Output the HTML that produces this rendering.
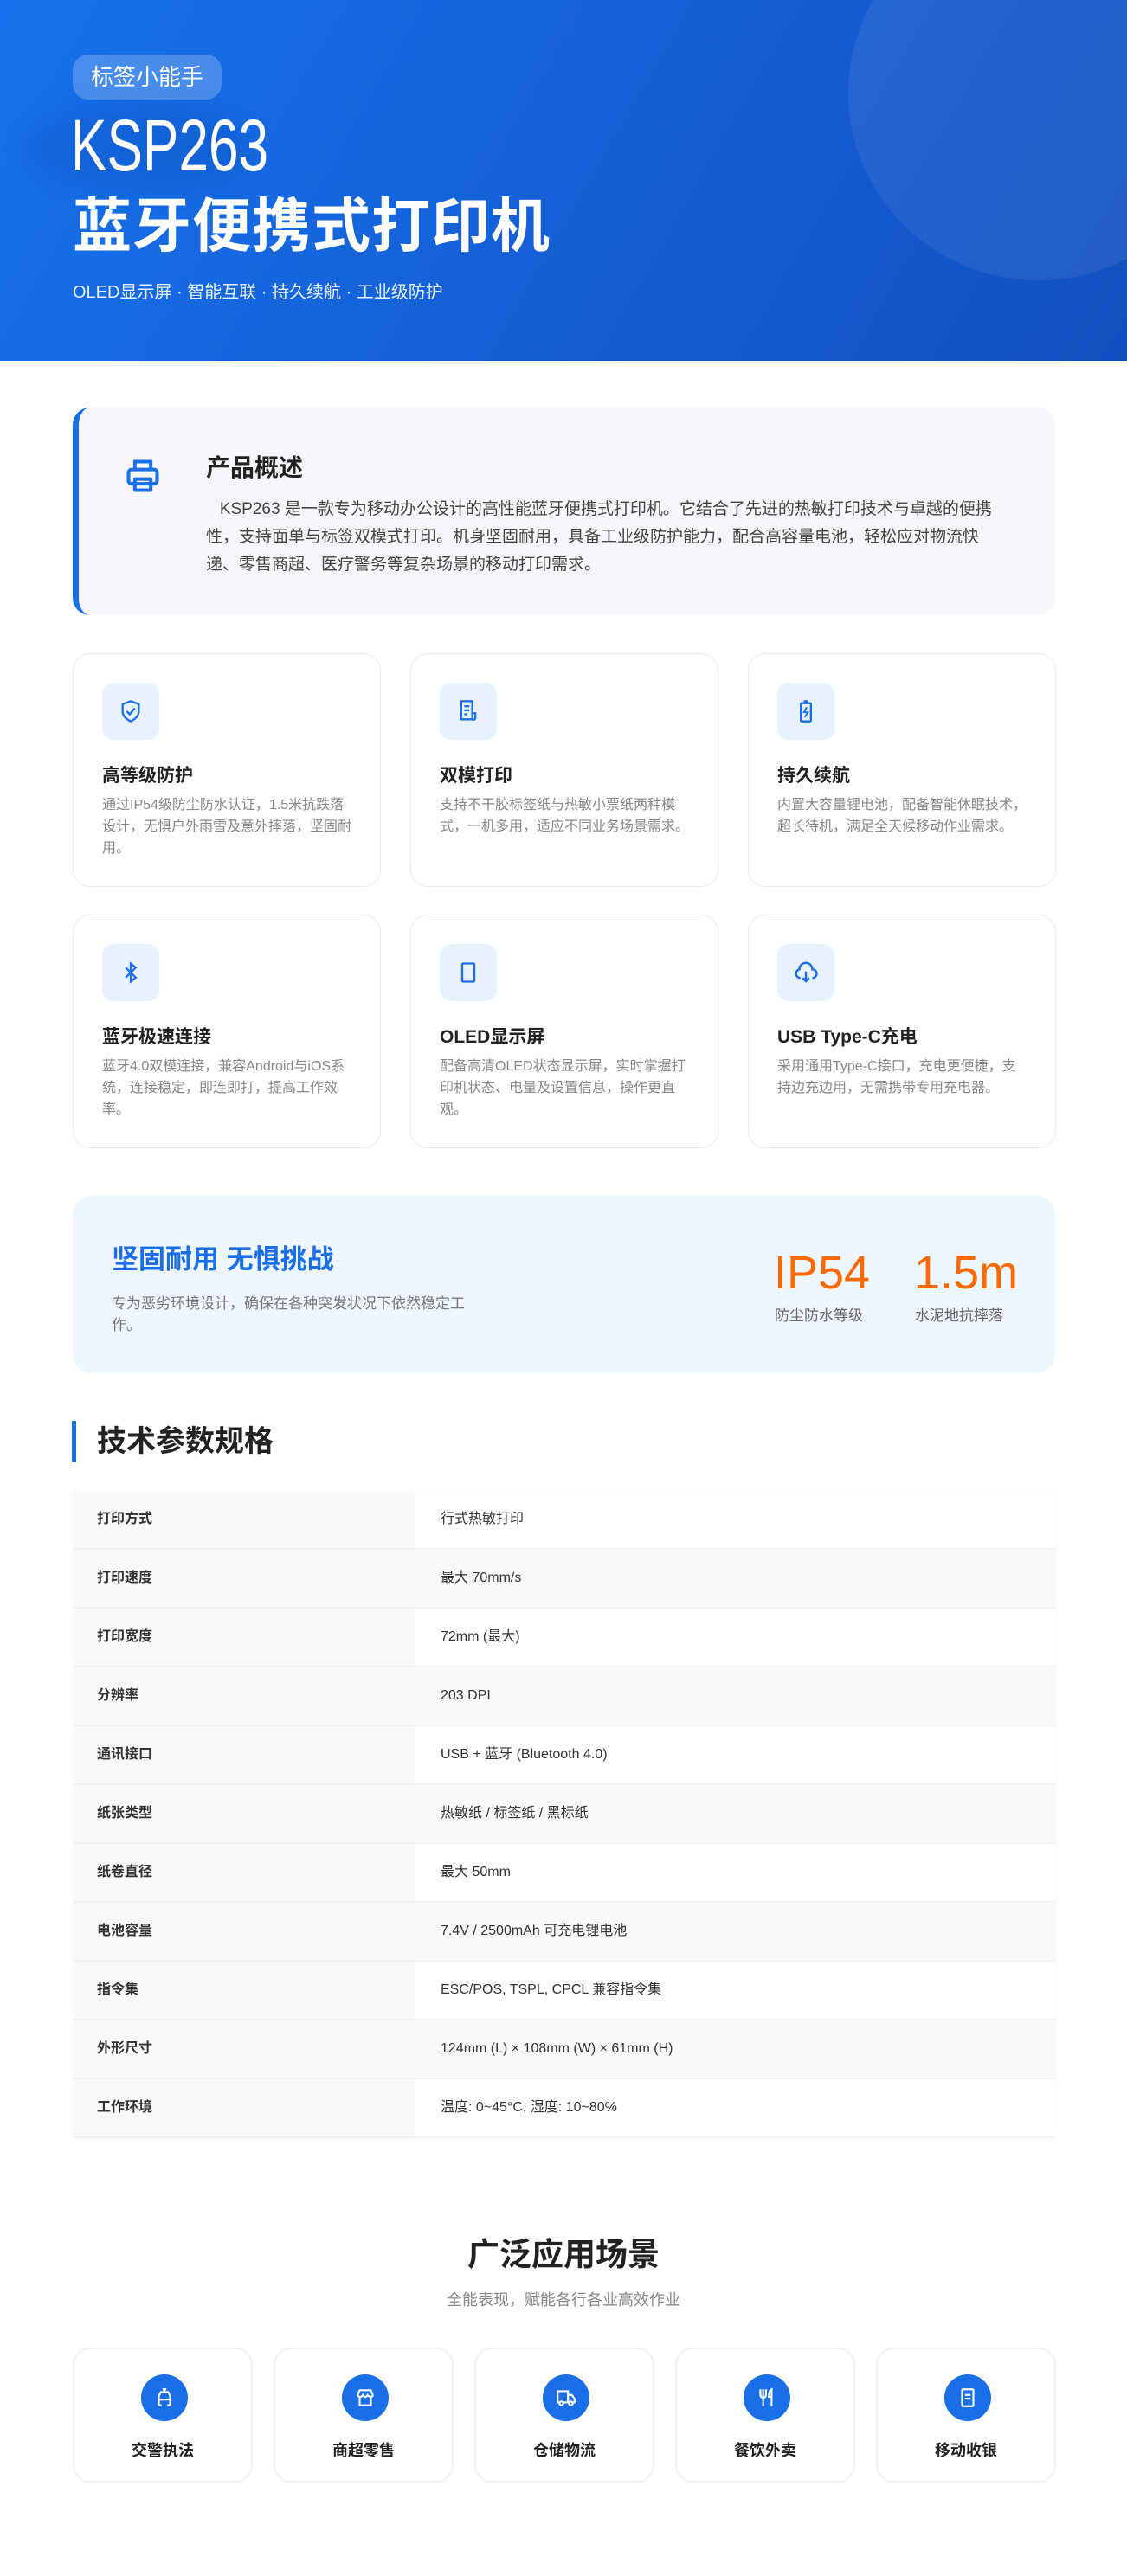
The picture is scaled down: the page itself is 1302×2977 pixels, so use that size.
<!DOCTYPE html>
<html><head><meta charset="utf-8"><style>
*{margin:0;padding:0;box-sizing:border-box}
body{width:1302px;height:2977px;background:#fff;font-family:"Liberation Sans","Noto Sans CJK SC",sans-serif;color:#333;position:relative;overflow:hidden}
.hero{position:absolute;left:0;top:0;width:1302px;height:417px;background:linear-gradient(120deg,#1672ec 0%,#1560d6 50%,#1150bf 100%);overflow:hidden}
.circ{position:absolute;left:980px;top:-110px;width:440px;height:434px;border-radius:50%;background:rgba(255,255,255,0.07)}
.blob{position:absolute;left:30px;top:120px;width:260px;height:100px;border-radius:50%;background:rgba(0,30,120,0.12);filter:blur(14px)}
.badge{position:absolute;left:84px;top:63px;width:172px;height:52px;border-radius:18px;background:rgba(255,255,255,0.22);color:#fff;font-size:26px;line-height:52px;text-align:center}
.h1{position:absolute;left:82px;top:122px;color:#fff;font-size:84px;line-height:92px;font-weight:400;transform:scaleX(0.74);transform-origin:left top}
.h2{position:absolute;left:84px;top:222px;color:#fff;font-size:68px;line-height:80px;font-weight:700;letter-spacing:1px}
.sub{position:absolute;left:84px;top:324px;color:rgba(255,255,255,0.9);font-size:20px;line-height:28px}
.ov{position:absolute;left:84px;top:471px;width:1135px;height:240px;background:#f5f7fa;border-radius:20px;border-left:7px solid #1a6fe8}
.ov svg{position:absolute;left:51px;top:57px}
.ov h3{position:absolute;left:147px;top:48px;font-size:28px;color:#222;font-weight:700}
.ov p{position:absolute;left:147px;top:102px;width:925px;font-size:19px;line-height:32px;color:#444}
.card{position:absolute;width:356px;height:270px;border:1.5px solid #e8eaee;border-radius:20px;background:#fff}
.ib{position:absolute;left:33px;top:33px;width:66px;height:66px;border-radius:13px;background:#e8f1fe;display:flex;align-items:center;justify-content:center}
.card h4{position:absolute;left:33px;top:124px;font-size:21px;color:#222;font-weight:700}
.card p{position:absolute;left:33px;top:162px;width:288px;font-size:16px;line-height:25px;color:#888}
.stat{position:absolute;left:84px;top:1382px;width:1135px;height:205px;background:#eef6ff;border-radius:22px}
.stat h3{position:absolute;left:45px;top:48px;font-size:31px;color:#1a6fe8;font-weight:700}
.stat p{position:absolute;left:45px;top:112px;width:418px;font-size:17px;line-height:25px;color:#777}
.num{position:absolute;top:56px;font-size:54px;line-height:66px;color:#ff6a00;font-weight:300}
.lbl{position:absolute;top:124px;font-size:17px;color:#666}
.sh{position:absolute;left:83px;top:1642px;height:48px;border-left:5px solid #1a6fe8;padding-left:24px;font-size:34px;line-height:48px;font-weight:700;color:#222}
table{position:absolute;left:84px;top:1722px;width:1135px;border-collapse:collapse;box-shadow:0 1px 4px rgba(0,0,0,0.04)}
td{height:68px;font-size:16px;line-height:20px;border-bottom:2px solid #f1f1f1;vertical-align:middle}
td.k{width:396px;background:#f9f9f9;padding-left:28px;font-weight:700;color:#333;font-size:16px}
td.v{padding-left:29px;color:#333}
tr:nth-child(even) td.v{background:#f9f9f9}
.at{position:absolute;left:0;width:1302px;text-align:center}
.ac{position:absolute;top:2713px;width:208px;height:156px;border:2px solid #eef0f4;border-radius:20px;background:#fff}
.ac .c{position:absolute;left:77px;top:29px;width:54px;height:54px;border-radius:50%;background:#1a6fe8;display:flex;align-items:center;justify-content:center}
.ac span{position:absolute;left:0;width:100%;top:103px;text-align:center;font-size:18px;font-weight:700;color:#222}
</style></head><body>
<div class="hero"><div class="circ"></div><div class="blob"></div>
<div class="badge">标签小能手</div>
<div class="h1">KSP263</div>
<div class="h2">蓝牙便携式打印机</div>
<div class="sub">OLED显示屏 · 智能互联 · 持久续航 · 工业级防护</div>
</div>

<div class="ov">
<svg width="46" height="44" viewBox="0 0 24 24" fill="none" stroke="#1a6fe8" stroke-width="2.2" stroke-linejoin="round"><path d="M7 8V3h10v5"/><rect x="3" y="8" width="18" height="9" rx="2"/><rect x="7" y="14" width="10" height="7"/></svg>
<h3>产品概述</h3>
<p>&nbsp;&nbsp;&nbsp;KSP263 是一款专为移动办公设计的高性能蓝牙便携式打印机。它结合了先进的热敏打印技术与卓越的便携性，支持面单与标签双模式打印。机身坚固耐用，具备工业级防护能力，配合高容量电池，轻松应对物流快递、零售商超、医疗警务等复杂场景的移动打印需求。</p>
</div>

<div class="card" style="left:84px;top:755px"><div class="ib"><svg width="28" height="30" viewBox="0 0 24 24" fill="none" stroke="#1a6fe8" stroke-width="2"><path d="M12 2l8 3v7c0 5-4 8-8 10-4-2-8-5-8-10V5z"/><path d="M8 12l3 3 5-6"/></svg></div><h4>高等级防护</h4><p>通过IP54级防尘防水认证，1.5米抗跌落设计，无惧户外雨雪及意外摔落，坚固耐用。</p></div>
<div class="card" style="left:474px;top:755px"><div class="ib"><svg width="28" height="30" viewBox="0 0 24 24" fill="none" stroke="#1a6fe8" stroke-width="2"><path d="M5 2h11v18H5z"/><path d="M16 14h3v5a2 2 0 0 1-3 1"/><path d="M8 7h5M8 11h5M8 15h3"/></svg></div><h4>双模打印</h4><p>支持不干胶标签纸与热敏小票纸两种模式，一机多用，适应不同业务场景需求。</p></div>
<div class="card" style="left:864px;top:755px"><div class="ib"><svg width="28" height="30" viewBox="0 0 24 24" fill="none" stroke="#1a6fe8" stroke-width="2"><rect x="7" y="4" width="10" height="18" rx="1"/><path d="M10 2h4"/><path d="M13 8l-3 5h4l-3 5" stroke-width="1.6"/></svg></div><h4>持久续航</h4><p>内置大容量锂电池，配备智能休眠技术，超长待机，满足全天候移动作业需求。</p></div>
<div class="card" style="left:84px;top:1057px"><div class="ib"><svg width="28" height="30" viewBox="0 0 24 24" fill="none" stroke="#1a6fe8" stroke-width="2"><path d="M7 7l10 10-5 4V3l5 4L7 17"/></svg></div><h4>蓝牙极速连接</h4><p>蓝牙4.0双模连接，兼容Android与iOS系统，连接稳定，即连即打，提高工作效率。</p></div>
<div class="card" style="left:474px;top:1057px"><div class="ib"><svg width="28" height="30" viewBox="0 0 24 24" fill="none" stroke="#1a6fe8" stroke-width="2"><rect x="6" y="3" width="12" height="18" rx="1"/><path d="M12 17h.01" stroke-width="2.5"/></svg></div><h4>OLED显示屏</h4><p>配备高清OLED状态显示屏，实时掌握打印机状态、电量及设置信息，操作更直观。</p></div>
<div class="card" style="left:864px;top:1057px"><div class="ib"><svg width="30" height="30" viewBox="0 0 24 24" fill="none" stroke="#1a6fe8" stroke-width="2"><path d="M7 17a4 4 0 0 1-1-7.9A6 6 0 0 1 18 9a4 4 0 0 1 0 8"/><path d="M12 11v9M9 17l3 3 3-3"/></svg></div><h4>USB Type-C充电</h4><p>采用通用Type-C接口，充电更便捷，支持边充边用，无需携带专用充电器。</p></div>

<div class="stat">
<h3>坚固耐用 无惧挑战</h3>
<p>专为恶劣环境设计，确保在各种突发状况下依然稳定工作。</p>
<div class="num" style="left:810px">IP54</div><div class="lbl" style="left:811px">防尘防水等级</div>
<div class="num" style="left:972px">1.5m</div><div class="lbl" style="left:973px">水泥地抗摔落</div>
</div>

<div class="sh">技术参数规格</div>
<table>
<tr><td class="k">打印方式</td><td class="v">行式热敏打印</td></tr>
<tr><td class="k">打印速度</td><td class="v">最大 70mm/s</td></tr>
<tr><td class="k">打印宽度</td><td class="v">72mm (最大)</td></tr>
<tr><td class="k">分辨率</td><td class="v">203 DPI</td></tr>
<tr><td class="k">通讯接口</td><td class="v">USB + 蓝牙 (Bluetooth 4.0)</td></tr>
<tr><td class="k">纸张类型</td><td class="v">热敏纸 / 标签纸 / 黑标纸</td></tr>
<tr><td class="k">纸卷直径</td><td class="v">最大 50mm</td></tr>
<tr><td class="k">电池容量</td><td class="v">7.4V / 2500mAh 可充电锂电池</td></tr>
<tr><td class="k">指令集</td><td class="v">ESC/POS, TSPL, CPCL 兼容指令集</td></tr>
<tr><td class="k">外形尺寸</td><td class="v">124mm (L) × 108mm (W) × 61mm (H)</td></tr>
<tr><td class="k">工作环境</td><td class="v">温度: 0~45°C, 湿度: 10~80%</td></tr>
</table>

<div class="at" style="top:2582px;font-size:37px;font-weight:700;color:#222;line-height:48px">广泛应用场景</div>
<div class="at" style="top:2645px;font-size:18px;color:#888;line-height:26px">全能表现，赋能各行各业高效作业</div>

<div class="ac" style="left:84px"><div class="c"><svg width="26" height="26" viewBox="0 0 24 24" fill="none" stroke="#fff" stroke-width="2"><path d="M10 3h4M12 3v3"/><path d="M6 20V10l2-4h8l2 4v10"/><path d="M6 14h12M6 20h3M15 20h3"/></svg></div><span>交警执法</span></div>
<div class="ac" style="left:316px"><div class="c"><svg width="26" height="26" viewBox="0 0 24 24" fill="none" stroke="#fff" stroke-width="2"><path d="M4 9l2-5h12l2 5c0 2-2 2-2.5 2S15 10 14.5 9c-.5 1-1.5 2-2.5 2s-2-1-2.5-2C9 10 8 11 6.5 11S4 10 4 9z"/><path d="M6 11v9h12v-9"/></svg></div><span>商超零售</span></div>
<div class="ac" style="left:548px"><div class="c"><svg width="26" height="26" viewBox="0 0 24 24" fill="none" stroke="#fff" stroke-width="2"><path d="M3 5h11v12H3zM14 9h4l3 4v4h-7"/><circle cx="7" cy="18" r="2" fill="#1a6fe8"/><circle cx="17" cy="18" r="2" fill="#1a6fe8"/></svg></div><span>仓储物流</span></div>
<div class="ac" style="left:780px"><div class="c"><svg width="26" height="26" viewBox="0 0 24 24" fill="none" stroke="#fff" stroke-width="2"><path d="M5 3v6a3 3 0 0 0 6 0V3M8 3v18"/><path d="M17 21V3c-2 1-3 4-3 8h3"/></svg></div><span>餐饮外卖</span></div>
<div class="ac" style="left:1012px"><div class="c"><svg width="26" height="26" viewBox="0 0 24 24" fill="none" stroke="#fff" stroke-width="2"><rect x="6" y="3" width="12" height="18" rx="1"/><path d="M9 9h6M9 13h6"/></svg></div><span>移动收银</span></div>
</body></html>
